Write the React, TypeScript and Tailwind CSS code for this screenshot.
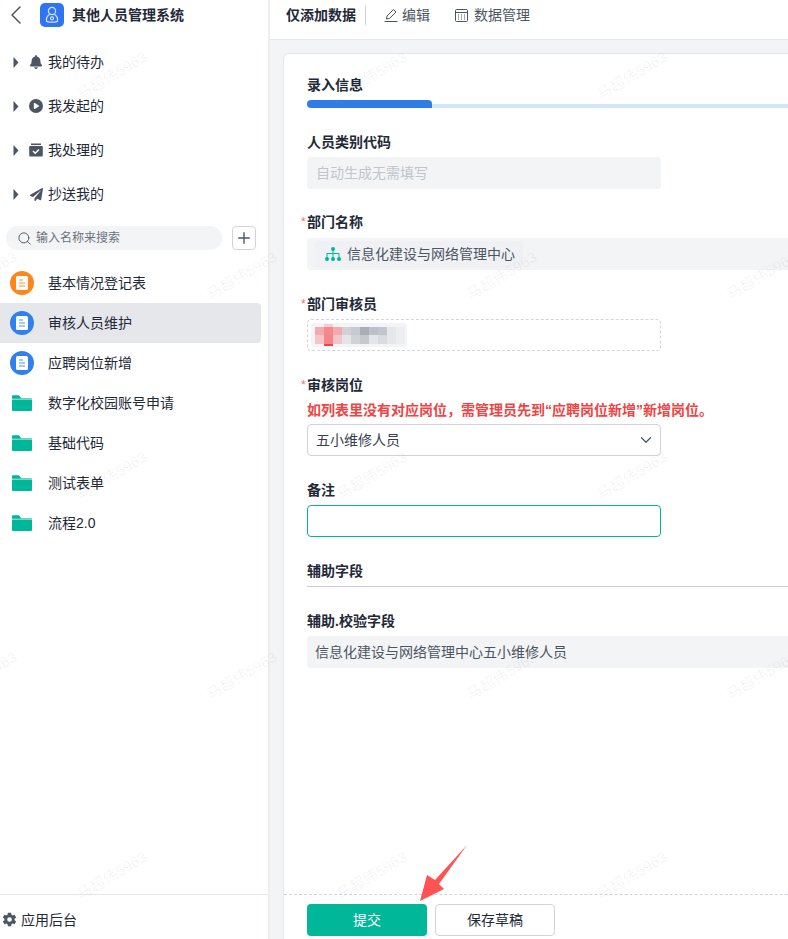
import type { ReactNode } from "react"
import { FaBell, FaPaperPlane } from "react-icons/fa"
import { FaCirclePlay } from "react-icons/fa6"
import { IoSettingsSharp } from "react-icons/io5"
import { ChevronDown, ChevronLeft, Plus, Search } from "lucide-react"

const watermarks: [number, number][] = [
    [112, 76], [372, 76], [632, 76],
    [-18, 276], [242, 276], [502, 276], [762, 276],
    [112, 476], [372, 476], [632, 476],
    [-18, 676], [242, 676], [502, 676], [762, 676],
    [112, 876], [372, 876], [632, 876],
]

function Caret() {
    return (
        <svg width="6" height="11" viewBox="0 0 6 11" className="shrink-0">
            <path d="M0.500 0 L5.500 5.500 L0.500 11 Z" fill="#4b5563" />
        </svg>
    )
}

function CalendarCheck() {
    return (
        <svg width="14" height="14" viewBox="0 0 14 14">
            <path d="M2 0.500h10v1.500H2z" fill="#4b5563" />
            <path d="M1 3h12a.8.8 0 0 1 .8.8v8.400a1.300 1.300 0 0 1-1.300 1.300h-11A1.300 1.300 0 0 1 .2 12.200V3.800A.8.8 0 0 1 1 3z" fill="#4b5563" />
            <path d="M4 8l2.200 2.200L10 6.400" stroke="#fff" strokeWidth="1.400" fill="none" />
        </svg>
    )
}

function DocCircle({ orange }: { orange?: boolean }) {
    return (
        <span className={orange ? "flex size-6 items-center justify-center rounded-full bg-[#ff8719]" : "flex size-6 items-center justify-center rounded-full bg-[#3080ee]"}>
            <svg width="12" height="14" viewBox="0 0 12 14">
                <rect width="12" height="14" rx="1.500" fill="#fff" />
                <path d="M3 4h4M3 7h6M3 10h6" stroke={orange ? "#ffb877" : "#8db8f5"} strokeWidth="1.500" />
            </svg>
        </span>
    )
}

function Folder() {
    return (
        <svg width="20" height="16" viewBox="0 0 20 16">
            <path d="M0 1.200a1 1 0 0 1 1-1h6l2.200 3H19a1 1 0 0 1 1 1V15a1 1 0 0 1-1 1H1a1 1 0 0 1-1-1z" fill="#00b899" />
            <path d="M0 4.200h20" stroke="#d8f4ee" strokeWidth="0.800" />
        </svg>
    )
}

function PendingRow({ icon, label }: { icon: ReactNode; label: string }) {
    return (
        <div className="flex h-11 items-center pl-[13px] text-sm leading-5 text-[#1f2937]">
            <Caret />
            <span className="ml-[10px] flex w-[14px] items-center justify-center text-[#4b5563]">{icon}</span>
            <span className="ml-[5px]">{label}</span>
        </div>
    )
}

function AppRow({ icon, label, active }: { icon: ReactNode; label: string; active?: boolean }) {
    return (
        <div className={active ? "flex h-10 items-center rounded-r bg-[#e5e7eb] text-sm leading-5 text-[#1f2937]" : "flex h-10 items-center text-sm leading-5 text-[#1f2937]"}>
            <span className="ml-[10px] flex w-6 justify-center">{icon}</span>
            <span className="ml-[14px]">{label}</span>
        </div>
    )
}

function Sidebar() {
    return (
        <aside className="flex h-full w-[270px] shrink-0 flex-col border-r-2 border-[#eceef1] bg-white">
            <div className="flex h-[30px] items-center">
                <ChevronLeft size={32} strokeWidth={1.100} className="text-[#4b5563]" />
                <span className="ml-2 flex size-6 items-center justify-center rounded-[5px] bg-[#2f74f0]">
                    <svg width="14" height="18" viewBox="0 0 14 18" fill="none" stroke="#cfe0ff" strokeWidth="1.200">
                        <circle cx="7" cy="5" r="3.600" />
                        <path d="M4.600 8.200 C2 10 1 12.500 1.600 15 C2 16.500 12 16.500 12.400 15 C13 12.500 12 10 9.400 8.200" />
                        <circle cx="7" cy="12.400" r="1.500" />
                    </svg>
                </span>
                <span className="ml-2 text-sm leading-5 font-bold text-[#1f2937]">其他人员管理系统</span>
            </div>
            <div className="mt-[10px]">
                <PendingRow icon={<FaBell size={14} />} label="我的待办" />
                <PendingRow icon={<FaCirclePlay size={14} />} label="我发起的" />
                <PendingRow icon={<CalendarCheck />} label="我处理的" />
                <PendingRow icon={<FaPaperPlane size={13} />} label="抄送我的" />
            </div>
            <div className="mt-[10px] flex items-center pl-[6px]">
                <div className="flex h-6 w-[216px] items-center rounded-full bg-[#f3f4f6] pl-[11px] text-xs leading-4 text-[#6b7280]">
                    <Search size={15} strokeWidth={1.500} className="text-[#4b5563]" />
                    <span className="ml-1">输入名称来搜索</span>
                </div>
                <div className="ml-[10px] flex size-6 items-center justify-center rounded border border-[#d1d5db]">
                    <Plus size={18} strokeWidth={1.800} className="text-[#4b5563]" />
                </div>
            </div>
            <div className="mt-[13px] w-[261px]">
                <AppRow icon={<DocCircle orange />} label="基本情况登记表" />
                <AppRow icon={<DocCircle />} label="审核人员维护" active />
                <AppRow icon={<DocCircle />} label="应聘岗位新增" />
                <AppRow icon={<Folder />} label="数字化校园账号申请" />
                <AppRow icon={<Folder />} label="基础代码" />
                <AppRow icon={<Folder />} label="测试表单" />
                <AppRow icon={<Folder />} label="流程2.0" />
            </div>
            <div className="mt-auto flex h-[45px] items-center border-t border-[#e5e7eb] pt-[5px] pl-[2px] text-sm leading-5 text-[#1f2937]">
                <IoSettingsSharp size={15} className="text-[#4b5563]" />
                <span className="ml-1">应用后台</span>
            </div>
        </aside>
    )
}

function Label({ children, required, className }: { children: ReactNode; required?: boolean; className: string }) {
    return (
        <div className={`relative h-5 text-sm leading-5 font-bold text-[#1f2937] ${className}`}>
            {required && <span className="absolute top-[2px] left-[-6px] text-xs font-normal text-[#f87171]">*</span>}
            {children}
        </div>
    )
}

// blurred name: thin top row, two full rows, thin red bottom row
const mosaic = [
    "", "bg-[#f6cdd0]", "", "", "", "", "", "", "", "",
    "bg-[#f3a9ae]", "bg-[#f48a8f]", "bg-[#f3a9ae]", "bg-[#d0d2d8]", "bg-[#c6c9cf]", "bg-[#a9aeb7]", "bg-[#bcc0c8]", "bg-[#c1c5cd]", "bg-[#e5e7eb]", "bg-[#eceef1]",
    "bg-[#f4c4c8]", "bg-[#f3868b]", "bg-[#f4c4c8]", "bg-[#e3e5e9]", "bg-[#cfd2d7]", "bg-[#c5c9cf]", "bg-[#e2e5e9]", "bg-[#d8dbe0]", "bg-[#e5e7eb]", "bg-[#eceef1]",
    "", "bg-[#ef4444]", "", "", "", "", "", "", "", "",
]

function Mosaic() {
    return (
        <div className="ml-[3px] flex h-6 w-[96px] items-center rounded bg-[#f3f4f6] pl-1">
            <div className="grid grid-cols-[repeat(10,9px)] grid-rows-[3px_8px_9px_2px]">
                {mosaic.map((color, i) => <span key={i} className={color} />)}
            </div>
        </div>
    )
}

function Form() {
    return (
        <div className="flex-1 pt-[21px] pl-[23px]">
            <Label className="">录入信息</Label>
            <div className="mt-[5px] flex h-2 w-[500px] items-end">
                <div className="h-2 w-[125px] rounded-t-[6px] rounded-bl-[6px] bg-[#2f7de9]" />
                <div className="h-1 flex-1 bg-[#d3e4fb]" />
            </div>

            <Label className="mt-6">人员类别代码</Label>
            <div className="mt-[5px] flex h-8 w-[354px] items-center rounded-sm bg-[#f3f4f6] pl-[9px] text-sm leading-5 text-[#c0c4cc]">自动生成无需填写</div>

            <Label required className="mt-[23px]">部门名称</Label>
            <div className="mt-[6px] flex h-8 w-[500px] items-center rounded-sm bg-[#f3f4f6] pl-2">
                <div className="flex h-[27px] items-center rounded bg-[#f0f1f4] pr-2 pl-[10px] text-sm leading-5 text-[#4b5563]">
                    <svg width="16" height="14" viewBox="0 0 16 14" fill="#00b899">
                        <circle cx="8" cy="2" r="2" />
                        <circle cx="2" cy="12" r="2" />
                        <circle cx="8" cy="12" r="2" />
                        <circle cx="14" cy="12" r="2" />
                        <path d="M7.500 3h1v3h5.500a.5.5 0 0 1 .5.5V11h-1V7H8.500v4h-1V7H2.500v4h-1V6.500a.5.5 0 0 1 .5-.5h5.500z" />
                    </svg>
                    <span className="ml-[6px]">信息化建设与网络管理中心</span>
                </div>
            </div>

            <Label required className="mt-6">部门审核员</Label>
            <div className="mt-[5px] flex h-8 w-[354px] items-center rounded-sm border border-dashed border-[#d1d5db]">
                <Mosaic />
            </div>

            <Label required className="mt-6">审核岗位</Label>
            <div className="mt-[5px] h-5 text-sm leading-5 font-bold whitespace-nowrap text-[#ef4444]">如列表里没有对应岗位，需管理员先到“应聘岗位新增”新增岗位。</div>
            <div className="mt-1 flex h-8 w-[354px] items-center justify-between rounded border border-[#d1d5db] pr-[5px] pl-2 text-sm leading-5 text-[#374151]">
                五小维修人员
                <ChevronDown size={18} strokeWidth={1.600} className="text-[#4b5563]" />
            </div>

            <Label className="mt-6">备注</Label>
            <div className="mt-[5px] h-8 w-[354px] rounded border border-[#00b899]" />

            <Label className="mt-6">辅助字段</Label>
            <div className="mt-[5px] h-px w-[500px] bg-[#c9ccd3]" />

            <Label className="mt-6">辅助.校验字段</Label>
            <div className="mt-[5px] flex h-8 w-[500px] items-center rounded-sm bg-[#f3f4f6] pl-2 text-sm leading-5 text-[#4b5563]">信息化建设与网络管理中心五小维修人员</div>
        </div>
    )
}

export default function App() {
    return (
        <div className="relative flex h-[939px] w-[788px] overflow-hidden bg-white font-['Liberation_Sans','Noto_Sans_CJK_SC',sans-serif]">
            <Sidebar />
            <main className="flex h-full min-w-0 flex-1 flex-col bg-[#f3f4f6]">
                <header className="flex h-10 shrink-0 items-start border-b border-[#e5e7eb] bg-white pt-[5px] pl-4 text-sm text-[#4b5563]">
                    <span className="h-5 leading-5 font-bold text-[#1f2937]">仅添加数据</span>
                    <span className="ml-[9px] h-5 w-px bg-[#d1d5db]" />
                    <svg width="14" height="14" viewBox="0 0 14 14" fill="none" stroke="#4b5563" className="mt-[3px] ml-[18px]">
                        <path d="M0.500 13.500h13M2.500 11l.5-3L9.500 1.500l2.500 2.500L5.500 10.500z" />
                    </svg>
                    <span className="ml-1 h-5 leading-5">编辑</span>
                    <svg width="13" height="13" viewBox="0 0 13 13" fill="none" stroke="#4b5563" className="mt-[4px] ml-[25px]">
                        <rect x="0.500" y="0.500" width="12" height="12" rx="1" />
                        <path d="M0.500 3.500h12M3 6h1M6 6h1M9 6h1M3 8h1M6 8h1M9 8h1M3 10h1M6 10h1M9 10h1" />
                    </svg>
                    <span className="ml-[6px] h-5 leading-5">数据管理</span>
                </header>
                <div className="flex min-h-0 flex-1 pt-[13px] pl-[13px]">
                    <section className="flex h-full w-[600px] shrink-0 flex-col rounded-tl-md border-t border-l border-[#e5e7eb] bg-white">
                        <Form />
                        <footer className="flex h-[45px] shrink-0 gap-2 border-t border-dashed border-[#d1d5db] pt-[9px] pl-[23px] text-sm leading-5">
                            <div className="flex h-8 w-[120px] items-center justify-center rounded bg-[#00b899] text-white">提交</div>
                            <div className="flex h-8 w-[120px] items-center justify-center rounded border border-[#d1d5db] text-[#1f2937]">保存草稿</div>
                        </footer>
                    </section>
                </div>
            </main>

            {/* annotation arrow drawn on the screenshot */}
            <svg width="788" height="939" viewBox="0 0 788 939" className="pointer-events-none absolute top-0 left-0">
                <path d="M467 845 L435 880 L427 875 L420 901 L444 889 L439 884 Z" fill="#ff5252" />
            </svg>

            {watermarks.map(([x, y]) => (
                <span
                    key={`${x}-${y}`}
                    className="pointer-events-none absolute -translate-x-1/2 -translate-y-1/2 -rotate-[31deg] text-[15px] whitespace-nowrap text-[#000000]/[0.06]"
                    style={{ left: x, top: y }}
                >
                    马超伟5963
                </span>
            ))}
        </div>
    )
}
